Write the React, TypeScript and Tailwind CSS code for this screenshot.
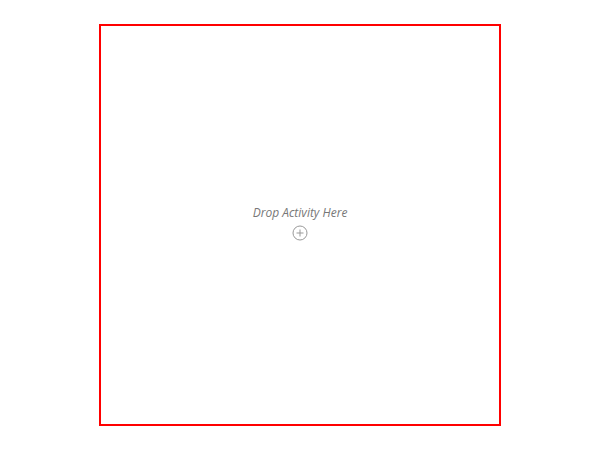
export default function App() {
  return (
    <div className="flex h-[450px] w-[600px] items-center justify-center bg-white">
      <div className="flex h-[402px] w-[402px] flex-col items-center justify-center border-2 border-[#ff0000]">
        <div className="-mt-[4px] flex flex-col items-center">
          <span className="text-[12px] italic leading-[16px] text-[#777777]" style={{ fontFamily: '"Open Sans", "Liberation Sans", sans-serif' }}>
            Drop Activity Here
          </span>
          <svg width="16" height="16" viewBox="0 0 16 16" className="mt-[4px]" fill="none" stroke="#999999" strokeWidth="1">
            <circle cx="8" cy="8" r="7" />
            <path d="M8 4.5v7M4.5 8h7" />
          </svg>
        </div>
      </div>
    </div>
  )
}
